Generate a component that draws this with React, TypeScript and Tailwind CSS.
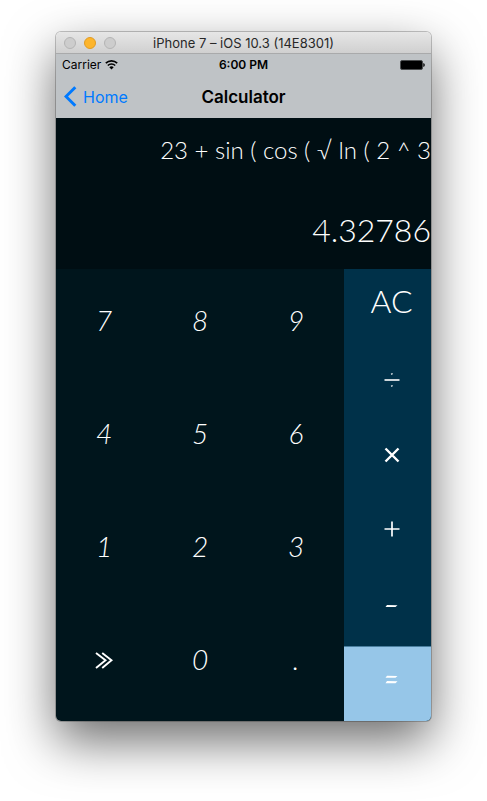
import React from "react";

const digits = ["7", "8", "9", "4", "5", "6", "1", "2", "3"];

function DigitKey({ label }: { label: string }) {
  return (
    <button type="button" className="flex items-center justify-center pb-3 text-[28px] leading-8 italic">
      {label}
    </button>
  );
}

function TitleBar() {
  return (
    <header className="relative flex h-[22px] items-center justify-center border-b border-[#a9aaab] bg-linear-to-b from-[#e6e6e6] to-[#d0d0d0]">
      <div className="absolute left-2 flex gap-2">
        <span className="size-3 rounded-full border border-[#b4b4b4] bg-[#cdcdcd]" />
        <span className="size-3 rounded-full border border-[#e09b24] bg-[#fdb52c]" />
        <span className="size-3 rounded-full border border-[#b4b4b4] bg-[#cdcdcd]" />
      </div>
      <span className="text-[13px] leading-5 text-[#282828]">iPhone 7 – iOS 10.3 (14E8301)</span>
    </header>
  );
}

function StatusBar() {
  return (
    <div className="grid h-[21px] grid-cols-3 items-center px-[6px] text-[12px] leading-5 text-black">
      <div className="flex items-center gap-1">
        <span>Carrier</span>
        <svg width="13" height="10" viewBox="0 0 13 10" fill="none" aria-label="Wi-Fi">
          <path d="M0.8 3.2a8.2 8.2 0 0 1 11.4 0" stroke="#000" strokeWidth="1.6" />
          <path d="M2.8 5.5a5.3 5.3 0 0 1 7.4 0" stroke="#000" strokeWidth="1.5" />
          <path d="M4.3 7.2a3.2 3.2 0 0 1 4.4 0L6.5 9.6z" fill="#000" />
        </svg>
      </div>
      <span className="text-center font-semibold">6:00 PM</span>
      <svg className="justify-self-end" width="25" height="10" viewBox="0 0 25 10" aria-label="Battery full">
        <rect x="0.5" y="0.5" width="22" height="9" rx="1.5" fill="#000" stroke="#4b4d4e" />
        <path d="M23.3 3v4q1.5-.5 1.5-2t-1.5-2z" fill="#000" />
      </svg>
    </div>
  );
}

function NavBar() {
  return (
    <nav className="grid h-[43px] grid-cols-3 items-center px-2">
      <a href="#home" className="flex items-center gap-[6px] text-[16px] leading-6 text-[#007aff]">
        <svg width="13" height="21" viewBox="0 0 13 21" fill="none" aria-hidden="true">
          <path d="M11.3 1.2L2 10.5l9.3 9.3" stroke="currentColor" strokeWidth="3" />
        </svg>
        Home
      </a>
      <h1 className="text-center text-[17px] leading-6 font-semibold text-black">Calculator</h1>
    </nav>
  );
}

function OpKey({ label, children }: { label: string; children: React.ReactNode }) {
  return (
    <button type="button" aria-label={label} className="flex items-center justify-center pb-1 pl-2 text-[28px] leading-8">
      {children}
    </button>
  );
}

export default function App() {
  return (
    <div className="min-h-screen bg-white px-14 pt-8 pb-20 font-['Inter',sans-serif]">
      <main className="overflow-hidden rounded-[5px] shadow-[0_0_0_1px_rgba(0,0,0,0.22),0_20px_50px_rgba(0,0,0,0.58)]">
        <TitleBar />
        <div className="bg-[#bfc3c6]">
          <StatusBar />
          <NavBar />
        </div>
        <div className="font-['Lato',sans-serif] font-light text-white">
          <section aria-label="Display" className="flex flex-col items-end gap-10 overflow-hidden bg-[#000e13] pt-3 pb-[19px] whitespace-nowrap">
            <output className="text-[24px] leading-10">23 + sin ( cos ( √ ln ( 2 ^ 3</output>
            <output className="text-[32px] leading-10">4.32786</output>
          </section>
          <section aria-label="Keypad" className="grid grid-cols-[288fr_87fr] bg-[#00151c]">
            <div className="grid auto-rows-[113px] grid-cols-3">
              {digits.map((d) => (
                <DigitKey key={d} label={d} />
              ))}
              <button type="button" aria-label="More functions" className="flex items-center justify-center pb-2">
                <svg width="18" height="17" viewBox="0 0 18 17" fill="none">
                  <path d="M1 1l9.5 7.3L1 16M7.2 1l9.3 7.3L7.2 16" stroke="#fff" strokeWidth="1.9" />
                </svg>
              </button>
              <DigitKey label="0" />
              <DigitKey label="." />
            </div>
            <div className="grid grid-rows-6 bg-[#003149]">
              <OpKey label="All clear">
                <span className="pb-2 text-[32px]">AC</span>
              </OpKey>
              <OpKey label="Divide">
                <svg width="16" height="14" viewBox="0 0 16 14" stroke="#fff">
                  <path d="M0.5 7h15" strokeWidth="1.6" />
                  <path d="M7 1.2l1.6-.6M7 13.2l1.6-.6" strokeWidth="1.2" />
                </svg>
              </OpKey>
              <OpKey label="Multiply">
                <svg width="16" height="16" viewBox="0 0 16 16" stroke="#fff" strokeWidth="2.4">
                  <path d="M1.5 1.5l13 13M14.5 1.5l-13 13" />
                </svg>
              </OpKey>
              <OpKey label="Add">
                <svg className="mb-1" width="16" height="16" viewBox="0 0 16 16" stroke="#fff" strokeWidth="1.7">
                  <path d="M0.5 8h15M8 0.5v15" />
                </svg>
              </OpKey>
              <OpKey label="Subtract">
                <svg width="13" height="4" viewBox="0 0 13 4" fill="#fff">
                  <path d="M2 1l10.5.2L10.5 3 .5 3z" />
                </svg>
              </OpKey>
              <button type="button" aria-label="Equals" className="flex items-center justify-center border-t border-[#4a7f9f] bg-[#96c6e8] pb-2 pl-2">
                <svg width="13" height="9" viewBox="0 0 13 9" fill="#fff">
                  <path d="M2 .7l10.5.2L10.5 2.8 .5 2.8zM2 6l10.5.2L10.5 8.2 .5 8.2z" />
                </svg>
              </button>
            </div>
          </section>
        </div>
      </main>
    </div>
  );
}
